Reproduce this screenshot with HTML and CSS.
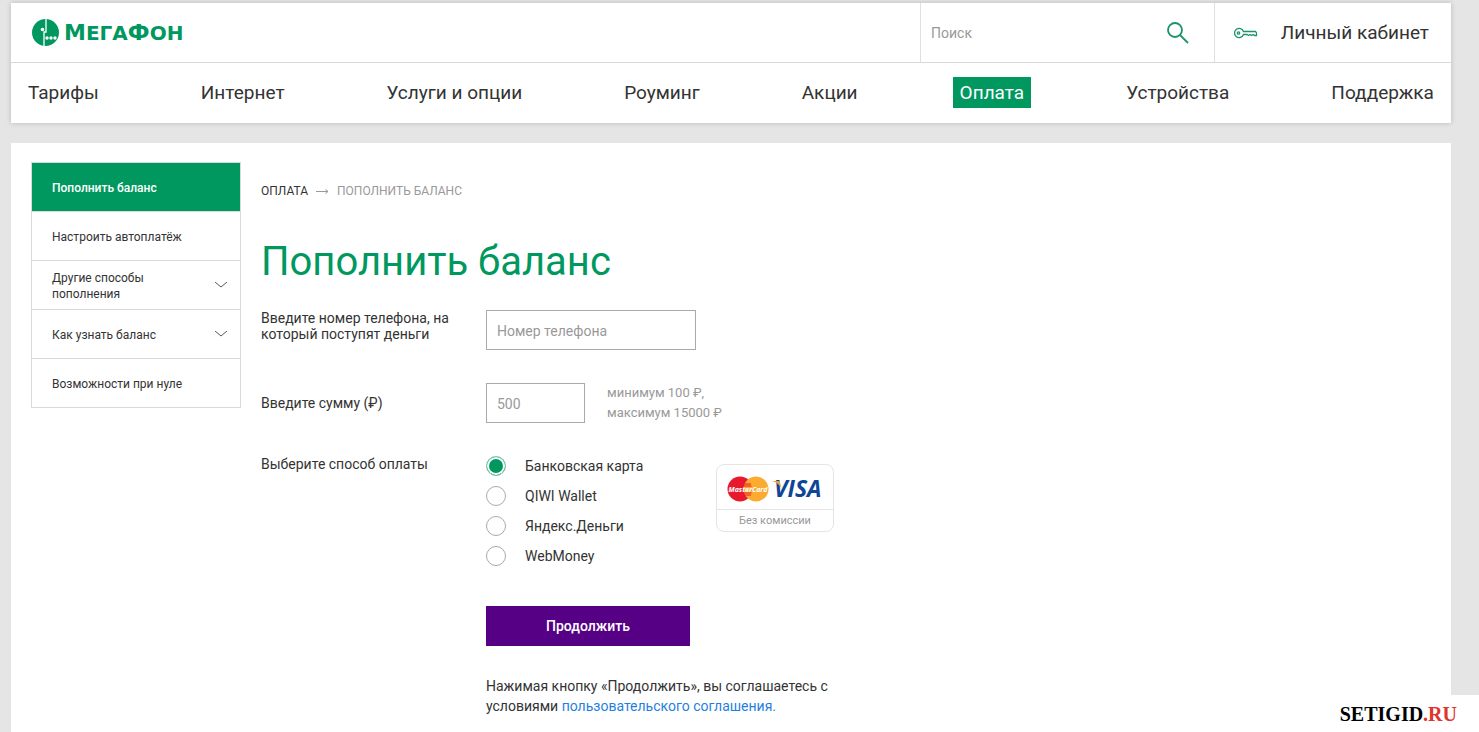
FILE: index.html
```html
<!DOCTYPE html>
<html lang="ru">
<head>
    <meta charset="UTF-8">
    <meta name="viewport" content="width=device-width, initial-scale=1.0">
    <title>Пополнить баланс — МегаФон</title>
    <link rel="stylesheet" href="styles.css">
</head>
<body>
    <header class="header">
        <div class="header-top">
            <a class="logo" href="#">
                <svg class="logo-mark" width="27" height="27" viewBox="0 0 27 27" aria-hidden="true">
                    <circle cx="13.5" cy="13.5" r="13.5" fill="#00985f"/>
                    <path d="M14 0V13H12V27" stroke="#fff" stroke-width="1.300" fill="none"/>
                    <circle cx="10.500" cy="10.500" r="1.800" fill="#fff"/>
                    <circle cx="15" cy="19" r="1.700" fill="#fff"/>
                    <circle cx="19" cy="19" r="1.700" fill="#fff"/>
                    <circle cx="23" cy="19" r="1.700" fill="#fff"/>
                </svg>
                <span class="logo-text">М<span>ЕГА</span>Ф<span>ОН</span></span>
            </a>
            <form class="search">
                <input class="search-input" type="text" placeholder="Поиск" aria-label="Поиск">
                <button class="search-btn" type="button" aria-label="Найти">
                    <svg width="24" height="24" viewBox="0 0 24 24" fill="none" stroke="#1c9468" stroke-width="1.800">
                        <circle cx="9" cy="9" r="7"/>
                        <path d="M14 14l8 8"/>
                    </svg>
                </button>
            </form>
            <a class="account" href="#">
                <svg width="24" height="12" viewBox="0 0 24 12" fill="none" stroke="#1c9468" stroke-width="1.300" aria-hidden="true">
                    <path d="M9.500 4.500A4.600 4.600 0 1 0 9.500 7.500H13l1.500 1 1.500-1 1.500 1 1.500-1 1.500 1h2V6l-1-1.500z"/>
                    <circle cx="4.500" cy="6" r="1.200"/>
                </svg>
                <span>Личный кабинет</span>
            </a>
        </div>
        <nav class="nav">
            <a href="#">Тарифы</a>
            <a href="#">Интернет</a>
            <a href="#">Услуги и опции</a>
            <a href="#">Роуминг</a>
            <a href="#">Акции</a>
            <a class="active" href="#">Оплата</a>
            <a href="#">Устройства</a>
            <a href="#">Поддержка</a>
        </nav>
    </header>

    <main class="page">
        <aside class="side-menu">
            <a class="active" href="#">Пополнить баланс</a>
            <a href="#">Настроить автоплатёж</a>
            <a href="#">
                <span>Другие способы пополнения</span>
                <svg width="14" height="8" viewBox="0 0 14 8" fill="none" stroke="#555"><path d="M1 0l6 5 6-5"/></svg>
            </a>
            <a href="#">
                <span>Как узнать баланс</span>
                <svg width="14" height="8" viewBox="0 0 14 8" fill="none" stroke="#555"><path d="M1 0l6 5 6-5"/></svg>
            </a>
            <a href="#">Возможности при нуле</a>
        </aside>

        <section class="content">
            <div class="breadcrumbs">
                <a href="#">ОПЛАТА</a>
                <svg width="13" height="7" viewBox="0 0 13 7" fill="none" stroke="#999"><path d="M0 3.500h12M9.500 1.500l2.500 2-2.500 2"/></svg>
                <span>ПОПОЛНИТЬ БАЛАНС</span>
            </div>
            <h1>Пополнить баланс</h1>

            <form class="pay-form">
                <div class="row row-phone">
                    <label class="row-label" for="phone">Введите номер телефона, на который поступят деньги</label>
                    <input class="field field-phone" id="phone" type="tel" placeholder="Номер телефона">
                </div>
                <div class="row row-sum">
                    <label class="row-label" for="sum">Введите сумму (₽)</label>
                    <input class="field field-sum" id="sum" type="text" placeholder="500">
                    <p class="hint">минимум 100 ₽,<br>максимум 15000 ₽</p>
                </div>
                <div class="row row-method">
                    <span class="row-label" id="methodLabel">Выберите способ оплаты</span>
                    <div class="methods" role="radiogroup" aria-labelledby="methodLabel">
                        <label><input type="radio" name="method" checked>Банковская карта</label>
                        <label><input type="radio" name="method">QIWI Wallet</label>
                        <label><input type="radio" name="method">Яндекс.Деньги</label>
                        <label><input type="radio" name="method">WebMoney</label>
                    </div>
                    <div class="cards">
                        <div class="cards-logos">
                            <svg width="98" height="32" viewBox="0 0 98 32" role="img" aria-label="MasterCard, Visa">
                                <circle cx="14" cy="16" r="12.500" fill="#e8192c"/>
                                <circle cx="30" cy="16" r="12.500" fill="#fbab30"/>
                                <path d="M18 11h7M17.500 13h8M17.500 20h8M18 22h7" stroke="#e8192c" stroke-width="1"/>
                                <text class="mc-text" x="22" y="19" text-anchor="middle">MasterCard</text>
                                <text class="visa-text" x="48" y="24">VISA</text>
                                <path d="M47 8h6.500l2.300 8.500C54.500 12.500 51 9.500 47 8.500z" fill="#e6a13a"/>
                            </svg>
                        </div>
                        <div class="cards-note">Без комиссии</div>
                    </div>
                </div>
                <div class="submit">
                    <button class="submit-btn" type="button">Продолжить</button>
                    <p class="terms">Нажимая кнопку «Продолжить», вы соглашаетесь с условиями <a href="#">пользовательского соглашения.</a></p>
                </div>
            </form>
        </section>
    </main>

    <div class="watermark">SETIGID<span>.RU</span></div>
</body>
</html>
```
FILE: styles.css
```css
* { box-sizing: border-box; }
body {
    margin: 0; padding: 3px 28px 0 11px;
    min-height: 100vh;
    display: flex; flex-direction: column; gap: 20px;
    background: #e5e5e5; color: #333;
    font-family: Roboto, "Liberation Sans", sans-serif;
    font-size: 14px; line-height: 16px;
}
a { color: inherit; text-decoration: none; }
p { margin: 0; }
input, button { font-family: inherit; }

/* header */
.header { background: #fff; box-shadow: 0 0 5px rgba(0,0,0,0.2); }
.header-top { display: flex; height: 60px; border-bottom: 1px solid #d9d9d9; }
.logo { display: flex; align-items: center; gap: 5px; padding-left: 21px; flex: 1; }
.logo-text {
    color: #00985f; font-family: "DejaVu Sans", sans-serif;
    font-size: 22px; font-weight: bold; line-height: 24px;
}
.logo-text span { font-size: 20px; }
.search {
    display: flex; align-items: center; justify-content: space-between;
    width: 294px; padding: 0 24px 0 10px;
    border-left: 1px solid #e0e0e0;
}
.search-input {
    flex: 1; min-width: 0; padding: 0;
    border: none; outline: none;
    font-size: 14px; color: #333;
}
.search-btn { display: flex; padding: 0; border: none; background: none; cursor: pointer; }
.account {
    display: flex; align-items: center; justify-content: space-between;
    width: 237px; padding: 0 22px 0 19px;
    border-left: 1px solid #e0e0e0; font-size: 19px;
}
.nav {
    display: flex; justify-content: space-between; align-items: center;
    height: 59px; margin-bottom: 1px; padding: 0 10px;
}
.nav a { padding: 0 7px; font-size: 19px; line-height: 31px; }
.nav .active { background: #00985f; color: #fff; }

/* page */
.page { flex: 1; display: flex; align-items: flex-start; gap: 20px; padding: 19px 20px 16px; background: #fff; }
.side-menu { width: 210px; border: 1px solid #d9d9d9; font-size: 12px; }
.side-menu a {
    display: flex; align-items: center; justify-content: space-between; gap: 40px;
    height: 49px; padding: 2px 12px 0 20px;
}
.side-menu a + a { border-top: 1px solid #d9d9d9; }
.side-menu svg { flex: none; }
.side-menu .active { height: 48px; background: #00985f; color: #fff; font-weight: 500; }

.content { flex: 1; }
.breadcrumbs { display: flex; align-items: center; gap: 8px; padding-top: 21px; font-size: 12px; color: #999; }
.breadcrumbs a { color: #333; }
h1 { margin: 38px 0 23px; color: #00985f; font-size: 40px; font-weight: 400; line-height: 50px; }

.row { display: flex; }
.row-label { width: 225px; padding-right: 24px; }
.field {
    height: 40px; padding: 2px 10px 0;
    border: 1px solid #aaa; background: #fff;
    font-size: 14px; color: #333;
}
input::placeholder { color: #999; opacity: 1; }
.field-phone { width: 210px; }
.field-sum { width: 99px; }
.row-sum { align-items: center; margin-top: 33px; }
.hint { padding-left: 22px; color: #999; font-size: 13px; line-height: 20px; }
.row-method { margin-top: 33px; }
.methods { width: 230px; }
.methods label { display: flex; align-items: center; gap: 19px; height: 20px; margin-bottom: 10px; }
.methods input {
    appearance: none; width: 20px; height: 20px; margin: 0;
    border: 1px solid #aaa; border-radius: 50%; background: #fff;
}
.methods input:checked { border-color: #80cbaf; background: #00985f; box-shadow: inset 0 0 0 2px #fff; }
.cards { width: 118px; height: 68px; margin-top: 8px; border: 1px solid #e5e5e5; border-radius: 8px; }
.cards-logos { display: flex; justify-content: center; align-items: center; height: 45px; padding-top: 4px; border-bottom: 1px solid #e5e5e5; }
.cards-logos svg { overflow: visible; }
.mc-text { fill: #fff; font: italic bold 7px "Open Sans", sans-serif; }
.visa-text { fill: #0e4595; font: italic bold 23px "Open Sans", sans-serif; }
.cards-note { color: #999; font-size: 11px; line-height: 22px; text-align: center; }

.submit { width: 350px; margin: 30px 0 0 225px; }
.submit-btn {
    width: 204px; height: 40px; border: none;
    background: #560086; color: #fff;
    font-size: 14px; font-weight: 500; cursor: pointer;
}
.terms { margin-top: 30px; line-height: 20px; }
.terms a { color: #1f7fe0; }

/* site mark over the bottom right corner */
.watermark {
    position: absolute; right: 0; bottom: 0;
    padding: 7px 22px 6px 20px; background: #fff; color: #000;
    font-family: "Liberation Serif", serif; font-size: 20px; font-weight: bold; line-height: 24px;
}
.watermark span { color: #e0352b; }
```
